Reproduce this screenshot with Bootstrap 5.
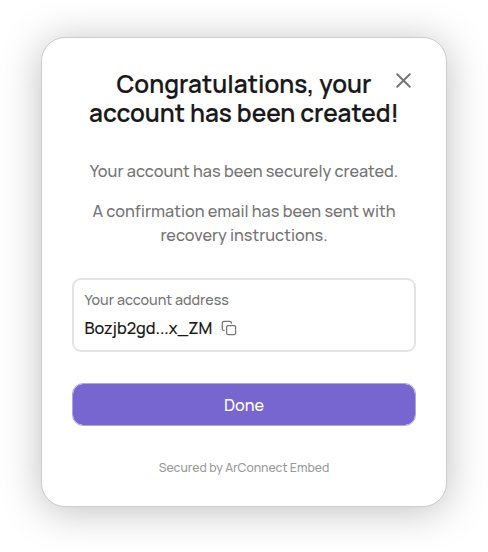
<!DOCTYPE html>
<html lang="en">
<head>
<meta charset="utf-8">
<meta name="viewport" content="width=device-width, initial-scale=1">
<title>Account created</title>
<link href="https://cdn.jsdelivr.net/npm/bootstrap@5.3.0/dist/css/bootstrap.min.css" rel="stylesheet">
<style>
body { font-family: Manrope, Inter, "Liberation Sans", sans-serif; background: #fff; color: #191919; }
.dialog-page { min-height: 552px; padding-top: 37px; }
.dialog-card { width: 406px; height: 470px; padding: 31px 30px 0; border: 1px solid #ccc; border-radius: 24px; box-shadow: 0 4px 40px rgba(0,0,0,.25); }
.dialog-title { font-size: 24.4px; line-height: 29px; font-weight: 600; -webkit-text-stroke: .15px currentColor; }
.dialog-close { top: 33px; right: 34px; width: 18px; height: 18px; color: #757575; line-height: 0; }
.message { margin-top: 32px; font-size: 16.27px; line-height: 24px; font-weight: 500; color: #757575; }
.address-box { height: 74px; margin-top: 31px; padding: 9px 10.5px; border: 2px solid #e3e3e3; border-radius: 9px; }
.address-label { font-size: 14.25px; line-height: 22px; font-weight: 500; color: #757575; }
.address-value { gap: 8.5px; font-size: 16.25px; line-height: 24px; margin-top: 5px; font-weight: 500; -webkit-text-stroke: .1px currentColor; }
.copy-btn { color: #757575; line-height: 0; }
.done-btn { --bs-btn-color: #fff; --bs-btn-bg: #7866d0; --bs-btn-border-color: #b0a5e3; --bs-btn-hover-color: #fff; --bs-btn-hover-bg: #6856c0; background-clip: padding-box; height: 43px; margin-top: 31px; border-radius: 11px; font-size: 16.2px; line-height: 24px; font-weight: 500; }
.secured { margin-top: 33px; font-size: 12.2px; line-height: 18px; font-weight: 500; color: #999; }
</style>
</head>
<body>
<div class="dialog-page">
<main class="dialog-card mx-auto bg-white position-relative text-center">
  <h1 class="dialog-title mb-0">Congratulations, your<br>account has been created!</h1>
  <button class="dialog-close btn p-0 border-0 position-absolute" aria-label="Close">
    <svg width="18" height="18" viewBox="0 0 18 18" fill="none" stroke="currentColor" stroke-width="2" stroke-linecap="round"><path d="M3.2 3.2 15.8 15.8M15.8 3.2 3.2 15.8"/></svg>
  </button>
  <div class="message">
    <p class="mb-3">Your account has been securely created.</p>
    <p class="mb-0">A confirmation email has been sent with<br>recovery instructions.</p>
  </div>
  <section class="address-box text-start">
    <div class="address-label">Your account address</div>
    <div class="address-value d-flex align-items-center">
      <span>Bozjb2gd...x_ZM</span>
      <button class="copy-btn btn p-0 border-0" aria-label="Copy address">
        <svg width="16" height="16" viewBox="0 0 16 16" fill="none" stroke="currentColor" stroke-width="1.25" stroke-linecap="round" stroke-linejoin="round"><rect x="5.6" y="5.6" width="9" height="9" rx="1.5"/><path d="M3.2 10.4h-.3A1.6 1.6 0 0 1 1.3 8.8V2.9a1.6 1.6 0 0 1 1.6-1.6h5.9a1.6 1.6 0 0 1 1.6 1.6v.3"/></svg>
      </button>
    </div>
  </section>
  <button class="done-btn btn w-100 py-0">Done</button>
  <div class="secured">Secured by ArConnect Embed</div>
</main>
</div>
<script src="https://cdn.jsdelivr.net/npm/bootstrap@5.3.0/dist/js/bootstrap.bundle.min.js"></script>
</body>
</html>
